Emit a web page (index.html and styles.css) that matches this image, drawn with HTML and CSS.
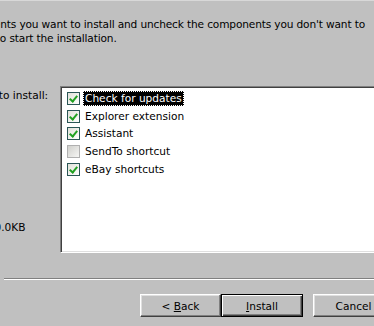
FILE: index.html
```html
<!DOCTYPE html>
<html lang="en">
<head>
<meta charset="UTF-8">
<meta name="viewport" content="width=device-width,initial-scale=1.0">
<title>Setup - Choose Components</title>
<link rel="stylesheet" href="styles.css">
</head>
<body>
<div class="dialog">
  <p class="intro">Check the components you want to install and uncheck the components you don't want to<br>install. Click Install to start the installation.</p>
  <div class="main">
    <div class="side">
      <span class="label">Select components to install:</span>
      <span class="space">Space required: 100.0KB</span>
    </div>
    <div class="list">
      <ul>
        <li class="row"><span class="box checked"></span><span class="name selected">Check for updates</span></li>
        <li class="row"><span class="box checked"></span><span class="name">Explorer extension</span></li>
        <li class="row"><span class="box checked"></span><span class="name">Assistant</span></li>
        <li class="row"><span class="box"></span><span class="name">SendTo shortcut</span></li>
        <li class="row"><span class="box checked"></span><span class="name">eBay shortcuts</span></li>
      </ul>
    </div>
  </div>
  <div class="sep"></div>
  <div class="buttons">
    <button class="btn">&lt; <u>B</u>ack</button>
    <button class="btn default"><u>I</u>nstall</button>
    <button class="btn cancel">Cancel</button>
  </div>
</div>
</body>
</html>
```

FILE: styles.css
```css
html,body{margin:0;padding:0;overflow:hidden}
body{background-color:#c0c0c0;font-family:"DejaVu Sans",sans-serif;font-size:10.6px;color:#000;height:326px;border-top:1px solid #d8d8d8;box-sizing:border-box}
.dialog{margin-left:-106px;width:580px}
.intro{margin:0;padding:16px 0 0 3px;line-height:14px;white-space:nowrap;letter-spacing:-.15px}
.main{display:flex;margin-top:41px}
.side{width:166px;height:167px;display:flex;flex-direction:column;justify-content:space-between;line-height:14px;padding-top:2px;padding-bottom:19px;box-sizing:border-box}
.list{width:400px;height:167px;background:#fff;box-sizing:border-box;border-style:solid;border-width:1px;border-color:#808080 #fff #fff #808080;box-shadow:inset 1px 1px 0 #404040,inset -1px -1px 0 #dfdfdf;padding:3px 0 0 6px}
.list ul{list-style:none;margin:0;padding:0}
.row{display:flex;align-items:center;height:17.6px}
.box{width:13px;height:13px;box-sizing:border-box;border:1px solid #b0b0b0;background:linear-gradient(135deg,#d0d0cc,#f6f6f4);position:relative}
.box.checked{border-color:#2b5656;background:linear-gradient(135deg,#e0e0d8,#fff)}
.box.checked::after{content:"";position:absolute;left:3px;top:1px;width:3px;height:6px;border:solid #21a121;border-width:0 2px 2px 0;transform:rotate(40deg)}
.name{margin-left:3px;padding:0 1px;line-height:13px;border:1px dotted transparent}
.name.selected{background:#000;color:#fff;border-color:#fff}
.sep{margin:25px 0 0 110px;height:1px;background:#808080;border-bottom:1px solid #fff}
.buttons{display:flex;margin:14px 0 0 246px}
.btn{width:81px;height:23px;padding:0;margin:0;font:inherit;color:#000;background:#c0c0c0;border-style:solid;border-width:1px;border-color:#fff #404040 #404040 #fff;box-shadow:inset -1px -1px 0 #808080,inset 1px 1px 0 #dfdfdf}
.btn.default{width:82px;border-color:#000;box-shadow:inset 1px 1px 0 #fff,inset -1px -1px 0 #404040,inset -2px -2px 0 #808080}
.btn.cancel{margin-left:10px}
```
